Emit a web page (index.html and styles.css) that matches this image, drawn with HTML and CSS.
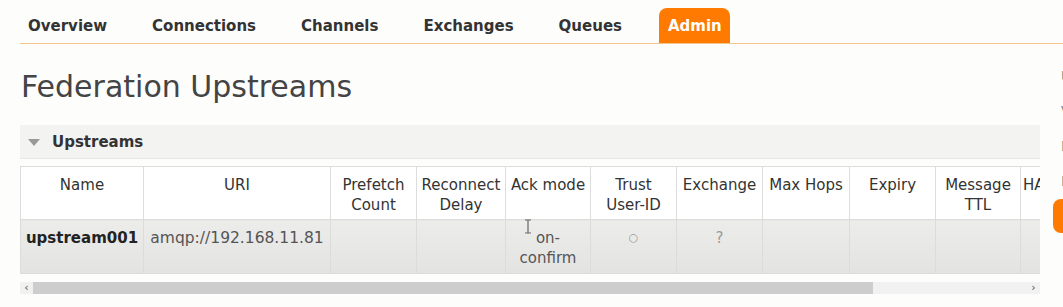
FILE: index.html
```html
<!DOCTYPE html>
<html lang="en">
<head>
    <meta charset="UTF-8">
    <title>RabbitMQ Management - Federation Upstreams</title>
    <link rel="stylesheet" href="styles.css">
</head>
<body>
    <div class="page">
        <nav class="tabs">
            <a class="tab">Overview</a>
            <a class="tab">Connections</a>
            <a class="tab">Channels</a>
            <a class="tab">Exchanges</a>
            <a class="tab">Queues</a>
            <a class="tab active">Admin</a>
        </nav>
        <div class="layout">
            <main class="main">
                <h1>Federation Upstreams</h1>
                <div class="section-head">
                    <span class="arrow"></span>
                    <h2>Upstreams</h2>
                </div>
                <div class="scroll">
                    <table class="list">
                        <colgroup>
                            <col style="width: 123px">
                            <col style="width: 187px">
                            <col style="width: 86px">
                            <col style="width: 89px">
                            <col style="width: 85px">
                            <col style="width: 86px">
                            <col style="width: 86px">
                            <col style="width: 87px">
                            <col style="width: 86px">
                            <col style="width: 85px">
                            <col style="width: 80px">
                            <col style="width: 90px">
                        </colgroup>
                        <thead>
                            <tr>
                                <th>Name</th>
                                <th>URI</th>
                                <th>Prefetch Count</th>
                                <th>Reconnect Delay</th>
                                <th>Ack mode</th>
                                <th>Trust User-ID</th>
                                <th>Exchange</th>
                                <th>Max Hops</th>
                                <th>Expiry</th>
                                <th>Message TTL</th>
                                <th class="left">HA Policy</th>
                                <th>Queue</th>
                            </tr>
                        </thead>
                        <tbody>
                            <tr>
                                <td class="name">upstream001</td>
                                <td class="uri">amqp://192.168.11.81</td>
                                <td></td>
                                <td></td>
                                <td class="cursor-cell">
                                    <svg class="ibeam" width="8" height="15" viewBox="0 0 8 15">
                                        <path d="M1 1h6M4 1v13M1 14h6" stroke="#666" stroke-width="1.2" fill="none"/>
                                    </svg>
                                    on-confirm
                                </td>
                                <td class="muted small">○</td>
                                <td class="muted">?</td>
                                <td></td>
                                <td></td>
                                <td></td>
                                <td></td>
                                <td></td>
                            </tr>
                        </tbody>
                    </table>
                </div>
                <div class="scrollbar">
                    <span class="scroll-arrow">&lsaquo;</span>
                    <span class="thumb"></span>
                    <span class="scroll-arrow right">&rsaquo;</span>
                </div>
            </main>
            <aside class="side">
                <div class="side-line">Upstream</div>
                <div class="side-line">Virtual host</div>
                <div class="side-line">Exchange</div>
                <div class="side-line">Info</div>
                <div class="side-btn">Add</div>
            </aside>
        </div>
    </div>
</body>
</html>
```

FILE: styles.css
```css
body {
    margin: 0;
    padding: 0;
    background: #fdfdfc;
    color: #333;
    font-family: "DejaVu Sans", Verdana, sans-serif;
    font-size: 15px;
    overflow: hidden;
}

.page {
    width: 1200px;
}

.tabs {
    display: flex;
    margin-left: 20px;
    padding-top: 8px;
    border-bottom: 1px solid #f2c58c;
}

.tab {
    display: block;
    height: 33px;
    line-height: 33px;
    padding: 2px 8px 0;
    margin-right: 29px;
    font-weight: bold;
    color: #333;
    border-radius: 8px 8px 0 0;
}

.tab.active {
    background: #ff7a00;
    color: #fff;
    padding: 2px 8px 0 9px;
}

.layout {
    display: flex;
    gap: 13px;
}

.main {
    width: 1020px;
    padding-left: 20px;
    flex-shrink: 0;
}

h1 {
    margin: 25px 0 20px 1px;
    font-size: 30px;
    line-height: 36px;
    font-weight: normal;
    color: #444;
}

.section-head {
    display: flex;
    align-items: center;
    gap: 12px;
    height: 32px;
    padding-left: 8px;
    padding-top: 1px;
    background: #f3f3f2;
    border-bottom: 1px solid #e6e6e6;
}

.arrow {
    width: 0;
    height: 0;
    border-left: 6px solid transparent;
    border-right: 6px solid transparent;
    border-top: 7px solid #999;
}

h2 {
    margin: 0;
    font-size: 15px;
    font-weight: bold;
    color: #333;
}

.scroll {
    margin-top: 7px;
    width: 1020px;
    overflow: hidden;
}

.list {
    table-layout: fixed;
    border-collapse: collapse;
    width: 1160px;
}

.list th,
.list td {
    border: 1px solid #dcdcdc;
    padding: 8px 4px 4px;
    line-height: 20px;
    text-align: center;
    vertical-align: top;
    font-size: 15px;
}

.list th {
    background: #fff;
    font-weight: normal;
    color: #333;
    height: 40px;
}

.list th.left {
    text-align: left;
    padding-left: 2px;
}

.list td {
    background: linear-gradient(#ececeb, #e3e3e2);
    color: #555;
    height: 41px;
}

.list td.name {
    font-weight: bold;
    color: #222;
    padding-left: 3px;
    padding-right: 3px;
}

.list td.uri {
    font-size: 15.5px;
}

.list td.muted {
    color: #999;
}

.list td.small {
    font-size: 11px;
    padding-top: 8px;
}

.cursor-cell {
    position: relative;
}

.ibeam {
    position: absolute;
    left: 18px;
    top: -1px;
}

.scrollbar {
    display: flex;
    align-items: center;
    margin-top: 8px;
    height: 12px;
    background: #f1f1f1;
}

.scroll-arrow {
    width: 13px;
    font-size: 11px;
    line-height: 12px;
    text-align: center;
    color: #555;
}

.scroll-arrow.right {
    margin-left: auto;
}

.thumb {
    width: 840px;
    height: 12px;
    background: #cdcdcd;
}

.side {
    padding-top: 15px;
    color: #888;
    font-size: 14px;
}

.side-line {
    line-height: 35px;
    padding-left: 8px;
}

.side-btn {
    width: 60px;
    height: 34px;
    line-height: 34px;
    border-radius: 8px;
    background: #ff7a00;
    color: #fff;
    font-weight: bold;
    padding-left: 16px;
}
```
